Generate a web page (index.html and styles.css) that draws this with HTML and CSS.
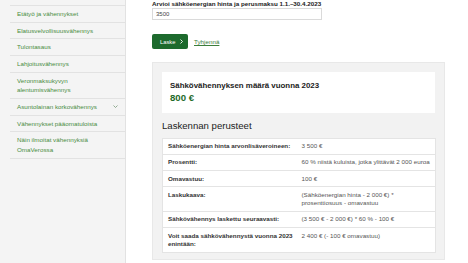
FILE: index.html
```html
<!DOCTYPE html>
<html lang="fi">
<head>
<meta charset="utf-8">
<title>Sähkövähennys</title>
<link rel="stylesheet" href="styles.css">
</head>
<body>
<div class="page">
  <aside class="sidebar">
    <ul class="nav">
      <li>Etätyö ja vähennykset</li>
      <li>Elatusvelvollisuusvähennys</li>
      <li>Tulontasaus</li>
      <li>Lahjoitusvähennys</li>
      <li>Veronmaksukyvyn<br>alentumisvähennys</li>
      <li class="has-sub"><span>Asuntolainan korkovähennys</span><svg class="chev" width="5" height="3" viewBox="0 0 5 3"><path d="M0.5 0.5 L2.5 2.5 L4.5 0.5" fill="none" stroke="#7a9a7a" stroke-width="0.8"/></svg></li>
      <li>Vähennykset pääomatuloista</li>
      <li>Näin ilmoitat vähennyksiä<br>OmaVerossa</li>
    </ul>
  </aside>
  <main class="main">
    <label class="field-label" for="hinta">Arvioi sähköenergian hinta ja perusmaksu 1.1.–30.4.2023</label>
    <input class="field-input" id="hinta" type="text" value="3500">
    <div class="actions">
      <button class="btn" type="button">Laske <svg class="btn-chev" width="3" height="5" viewBox="0 0 3 5"><path d="M0.5 0.5 L2.5 2.5 L0.5 4.5" fill="none" stroke="#fff" stroke-width="0.9"/></svg></button>
      <a class="clear" href="#">Tyhjennä</a>
    </div>
    <section class="result">
      <div class="result-box">
        <div class="result-title">Sähkövähennyksen määrä vuonna 2023</div>
        <div class="result-amount">800 €</div>
      </div>
      <h2 class="basis-title">Laskennan perusteet</h2>
      <table class="basis">
        <colgroup><col class="c1"><col class="c2"></colgroup>
        <tr><th>Sähköenergian hinta arvonlisäveroineen:</th><td>3 500 €</td></tr>
        <tr><th>Prosentti:</th><td>60 % niistä kuluista, jotka ylittävät 2 000 euroa</td></tr>
        <tr><th>Omavastuu:</th><td>100 €</td></tr>
        <tr><th>Laskukaava:</th><td>(Sähköenergian hinta - 2 000 €) *<br>prosenttiosuus - omavastuu</td></tr>
        <tr><th>Sähkövähennys laskettu seuraavasti:</th><td>(3 500 € - 2 000 €) * 60 % - 100 €</td></tr>
        <tr><th>Voit saada sähkövähennystä vuonna 2023<br>enintään:</th><td>2 400 € (- 100 € omavastuu)</td></tr>
      </table>
    </section>
  </main>
</div>
</body>
</html>
```
FILE: styles.css
```css
html, body {
  margin: 0;
  padding: 0;
  background: #fff;
}
body {
  font-family: "Liberation Sans", Arial, sans-serif;
  color: #333;
}
.page {
  display: flex;
  align-items: stretch;
  min-height: 263px;
}
.sidebar {
  width: 125px;
  background: #f4f4f4;
  border-right: 1px solid #e2e2e2;
  padding-top: 5px;
  box-sizing: content-box;
}
.nav {
  list-style: none;
  margin: 0;
  padding: 0 0 0 10px;
}
.nav li {
  border-top: 1px solid #e2e2e2;
  padding: 3.05px 6px 3.05px 7px;
  font-size: 6.25px;
  line-height: 9.6px;
  color: #4a8d43;
}
.nav li:last-child {
  border-bottom: 1px solid #e2e2e2;
}
.nav li.has-sub {
  display: flex;
  justify-content: space-between;
  align-items: center;
}
.chev {
  display: block;
  margin-right: 1px;
}
.main {
  padding-left: 26px;
  width: 293px;
}
.field-label {
  display: block;
  font-size: 6.25px;
  line-height: 8px;
  font-weight: bold;
  color: #222;
}
.field-input {
  display: block;
  box-sizing: border-box;
  width: 170px;
  height: 12px;
  margin: 0;
  padding: 0 3px;
  border: 1px solid #dadada;
  font-family: "Liberation Sans", Arial, sans-serif;
  font-size: 6px;
  color: #444;
  background: #fff;
  outline: none;
}
.actions {
  display: flex;
  align-items: center;
  margin-top: 14px;
}
.btn {
  display: flex;
  align-items: center;
  gap: 5px;
  box-sizing: border-box;
  width: 36px;
  height: 15px;
  margin: 0;
  padding: 0 0 0 8px;
  border: 0;
  border-radius: 2px;
  background: #1d6a2d;
  color: #fff;
  font-family: "Liberation Sans", Arial, sans-serif;
  font-size: 5.8px;
}
.btn-chev {
  display: block;
}
.clear {
  margin-left: 6px;
  font-size: 6.25px;
  color: #3c7d3a;
  text-decoration: underline;
}
.result {
  margin-top: 13px;
  background: #f2f2f2;
  border: 1px solid #e8e8e8;
  padding: 9px 9px 6px 9px;
}
.result-box {
  background: #fff;
  padding: 9px 8px 9px 8px;
}
.result-title {
  font-size: 7.9px;
  line-height: 10px;
  font-weight: bold;
  color: #222;
}
.result-amount {
  margin-top: 1px;
  font-size: 9.6px;
  line-height: 12px;
  font-weight: bold;
  color: #1f6b2a;
}
.basis-title {
  margin: 7px 0 5.5px 0;
  font-size: 9.6px;
  line-height: 12px;
  font-weight: normal;
  color: #222;
}
.basis {
  width: 273px;
  table-layout: fixed;
  border-collapse: collapse;
  background: #fff;
  border: 1px solid #e4e4e4;
}
.basis .c1 { width: 135px; }
.basis .c2 { width: 138px; }
.basis th,
.basis td {
  padding: 3.5px 3px 3.5px 5px;
  font-size: 6.25px;
  line-height: 8.3px;
  text-align: left;
  vertical-align: top;
  border-bottom: 1px solid #e4e4e4;
}
.basis th {
  font-weight: bold;
  color: #333;
}
.basis td {
  font-weight: normal;
  color: #555;
  padding-left: 4px;
}
```
